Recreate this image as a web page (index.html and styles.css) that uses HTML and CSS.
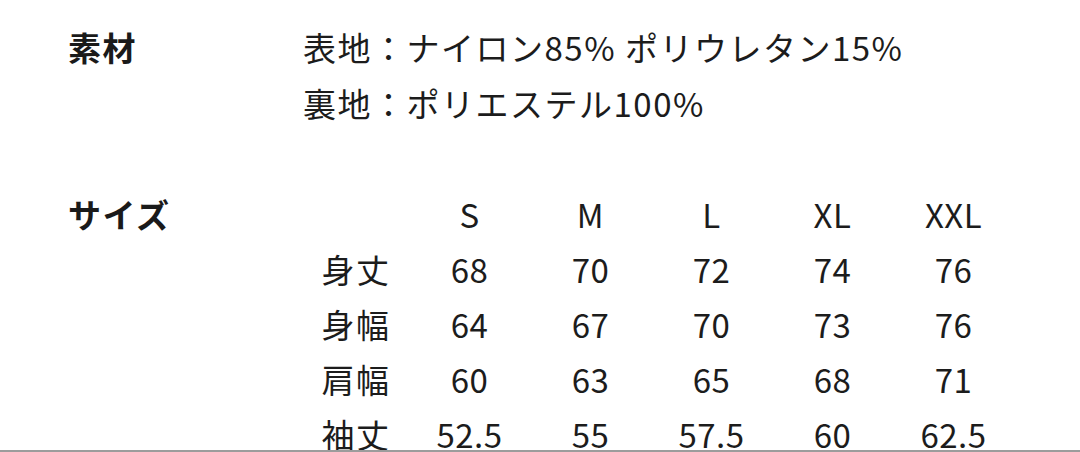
FILE: index.html
```html
<!DOCTYPE html>
<html lang="ja">
<head>
<meta charset="utf-8">
<link rel="stylesheet" href="styles.css">
</head>
<body>
<div class="page">
  <section class="spec material">
    <div class="label">素材</div>
    <div class="value">
      <div class="line">表地：ナイロン85% ポリウレタン15%</div>
      <div class="line">裏地：ポリエステル100%</div>
    </div>
  </section>
  <section class="spec size">
    <div class="label">サイズ</div>
    <div class="table">
      <div class="cell head"></div><div class="cell">S</div><div class="cell">M</div><div class="cell">L</div><div class="cell">XL</div><div class="cell">XXL</div>
      <div class="cell head">身丈</div><div class="cell">68</div><div class="cell">70</div><div class="cell">72</div><div class="cell">74</div><div class="cell">76</div>
      <div class="cell head">身幅</div><div class="cell">64</div><div class="cell">67</div><div class="cell">70</div><div class="cell">73</div><div class="cell">76</div>
      <div class="cell head">肩幅</div><div class="cell">60</div><div class="cell">63</div><div class="cell">65</div><div class="cell">68</div><div class="cell">71</div>
      <div class="cell head">袖丈</div><div class="cell">52.5</div><div class="cell">55</div><div class="cell">57.5</div><div class="cell">60</div><div class="cell">62.5</div>
    </div>
  </section>
</div>
<div class="bottom-rule"></div>
</body>
</html>
```

FILE: styles.css
```css
html, body {
  margin: 0;
  padding: 0;
  background: #ffffff;
}
body {
  font-family: "Noto Sans CJK JP", "Noto Sans", sans-serif;
  color: #1c1c1c;
  font-size: 33px;
  letter-spacing: 1.5px;
  overflow: hidden;
}
.page {
  padding: 19px 0 0 68px;
}
.spec {
  display: grid;
  grid-template-columns: 235px 1fr;
}
.label {
  font-weight: 700;
  line-height: 56px;
  color: #1a1a1a;
  letter-spacing: 1.5px;
}
.line {
  line-height: 56px;
  white-space: nowrap;
}
.size {
  margin-top: 56px;
}
.table {
  display: grid;
  grid-template-columns: 106px repeat(5, 121px);
  grid-auto-rows: 55px;
  align-items: center;
}
.cell {
  text-align: center;
  line-height: 55px;
  white-space: nowrap;
  letter-spacing: 0.5px;
}
.cell.head {
  letter-spacing: 1.5px;
}
.size .label {
  line-height: 55px;
}
.bottom-rule {
  position: fixed;
  left: 0;
  right: 0;
  bottom: 0;
  height: 2px;
  background: #9c9c9c;
}
```
